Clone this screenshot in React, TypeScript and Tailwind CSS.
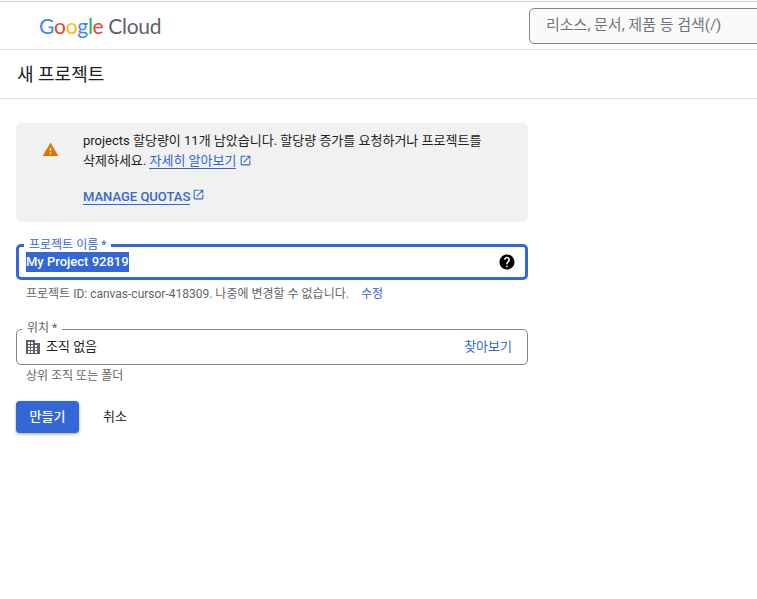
import React from 'react';

const FONT = "font-['Roboto','Noto_Sans_CJK_KR',sans-serif]";

const OpenInNew = ({ className }: { className: string }) => (
    <svg viewBox="0 0 24 24" fill="currentColor" className={className}>
        <path d="M19 19H5V5h7V3H5c-1.11 0-2 .9-2 2v14c0 1.1.89 2 2 2h14c1.1 0 2-.9 2-2v-7h-2v7zM14 3v2h3.59l-9.83 9.83 1.41 1.41L19 6.41V10h2V3h-7z" />
    </svg>
);

const Logo = () => (
    <div className="flex items-center text-[21px] leading-none tracking-[-0.3px] font-['Lato',sans-serif]">
        <span className="text-[#4285f4]">G</span>
        <span className="text-[#ea4335]">o</span>
        <span className="text-[#fbbc04]">o</span>
        <span className="text-[#4285f4]">g</span>
        <span className="text-[#34a853]">l</span>
        <span className="text-[#ea4335]">e</span>
        <span className="ml-[5px] text-[#5f6368]">Cloud</span>
    </div>
);

const App = () => {
    return (
        <div className={`${FONT} w-[757px] h-[599px] overflow-hidden bg-white pt-px text-[#202124]`}>
            <header className="h-[49px] border-t border-b border-t-[#cccccc] border-b-[#e0e0e0] flex items-center">
                <button className="ml-[17px] flex flex-col gap-[3px] w-[18px]">
                    <span className="block h-[2px] bg-[#5f6368]" />
                    <span className="block h-[2px] bg-[#5f6368]" />
                    <span className="block h-[2px] bg-[#5f6368]" />
                </button>
                <div className="ml-[22px] w-[120px] shrink-0">
                    <Logo />
                </div>
                <div className="ml-[370px] shrink-0 w-[300px] h-[36px] border border-[#80868b] rounded-[5px] bg-[#fafafa] pl-[16px] flex items-center text-[15px] text-[#70757a]">
                    리소스, 문서, 제품 등 검색(/)
                </div>
            </header>

            <div className="h-[49px] border-b border-[#e0e0e0] pl-[17px] flex items-center text-[18px] text-[#202124]">
                새 프로젝트
            </div>

            <main className="pl-4 pt-6 w-[528px]">
                <div className="h-[99px] bg-[#f1f1f1] rounded-[5px] flex pt-[8px]">
                    <div className="w-[67px] shrink-0 pl-[26px] pt-[10px]">
                        <svg viewBox="0 0 24 24" fill="#e37400" className="w-[17px] h-[17px]">
                            <path d="M1 21h22L12 2 1 21zm12-3h-2v-2h2v2zm0-4h-2v-4h2v4z" />
                        </svg>
                    </div>
                    <div className="text-[13px] leading-[20px] w-[430px] text-[#202124]">
                        <p>projects 할당량이 11개 남았습니다. 할당량 증가를 요청하거나 프로젝트를</p>
                        <p>
                            삭제하세요.{' '}
                            <a className="text-[#3367d6] border-b border-[#3367d6]">자세히 알아보기</a>
                            <OpenInNew className="inline-block w-[13px] h-[13px] ml-[3px] text-[#3367d6] align-[-2px]" />
                        </p>
                        <p className="mt-[16px] text-[#3367d6] font-medium">
                            <a className="border-b border-[#3367d6]">MANAGE QUOTAS</a>
                            <OpenInNew className="inline-block w-[13px] h-[13px] ml-[2px] align-[0px]" />
                        </p>
                    </div>
                </div>

                <div className="relative mt-[22px] h-[36px] border-[3px] border-[#3367d6] rounded-[5px] flex items-center pl-[7px] pr-[9px] justify-between">
                    <label className="absolute left-[5px] top-[-9px] bg-white px-[5px] text-[12px] leading-[14px] text-[#3367d6]">
                        프로젝트 이름 *
                    </label>
                    <span className="bg-[#3367d6] text-white text-[13px] font-medium leading-[20px]">My Project 92819</span>
                    <svg viewBox="0 0 24 24" fill="#000000" className="w-[18px] h-[18px]">
                        <path d="M12 2C6.48 2 2 6.48 2 12s4.48 10 10 10 10-4.48 10-10S17.52 2 12 2zm1 17h-2v-2h2v2zm2.07-7.75l-.9.92C13.45 12.9 13 13.5 13 15h-2v-.5c0-1.1.45-2.1 1.17-2.83l1.24-1.26c.37-.36.59-.86.59-1.41 0-1.1-.9-2-2-2s-2 .9-2 2H8c0-2.21 1.79-4 4-4s4 1.79 4 4c0 .88-.36 1.68-.93 2.25z" />
                    </svg>
                </div>
                <div className="mt-[6px] pl-[10px] text-[12px] leading-[16px] text-[#5f6368] flex">
                    <span>프로젝트 ID: canvas-cursor-418309. 나중에 변경할 수 없습니다.</span>
                    <a className="ml-[12px] text-[#3367d6]">수정</a>
                </div>

                <div className="relative mt-[27px] h-[36px] border border-[#80868b] rounded-[5px] flex items-center pl-[9px] pr-[15px] justify-between">
                    <label className="absolute left-[5px] top-[-9px] bg-white px-[5px] text-[12px] leading-[14px] text-[#5f6368]">
                        위치 *
                    </label>
                    <div className="flex items-center text-[13px] text-[#202124]">
                        <svg viewBox="0 0 14 14" fill="#5f6368" className="w-[14px] h-[14px] mr-[6px]">
                            <path fillRule="evenodd" d="M0 0h9v3h5v11H0zM2 2v2h2V2zm3 0v2h2V2zM2 5v2h2V5zm3 0v2h2V5zm4 0v2h2V5zM2 8v2h2V8zm3 0v2h2V8zm4 0v2h2V8zM2 11v2h2v-2zm3 0v2h2v-2zm4 0v2h2v-2z" />
                        </svg>
                        조직 없음
                    </div>
                    <a className="text-[13px] text-[#3367d6]">찾아보기</a>
                </div>
                <div className="mt-[3px] pl-[10px] text-[12px] leading-[16px] text-[#5f6368]">상위 조직 또는 폴더</div>

                <div className="mt-[17px] flex items-center">
                    <button className="w-[63px] h-[32px] bg-[#3367d6] text-white text-[13px] font-medium rounded-[4px] shadow-[0_1px_3px_rgba(60,64,67,0.5)]">
                        만들기
                    </button>
                    <button className="ml-[24px] text-[13px] text-[#202124]">취소</button>
                </div>
            </main>
        </div>
    );
};

export default App;
